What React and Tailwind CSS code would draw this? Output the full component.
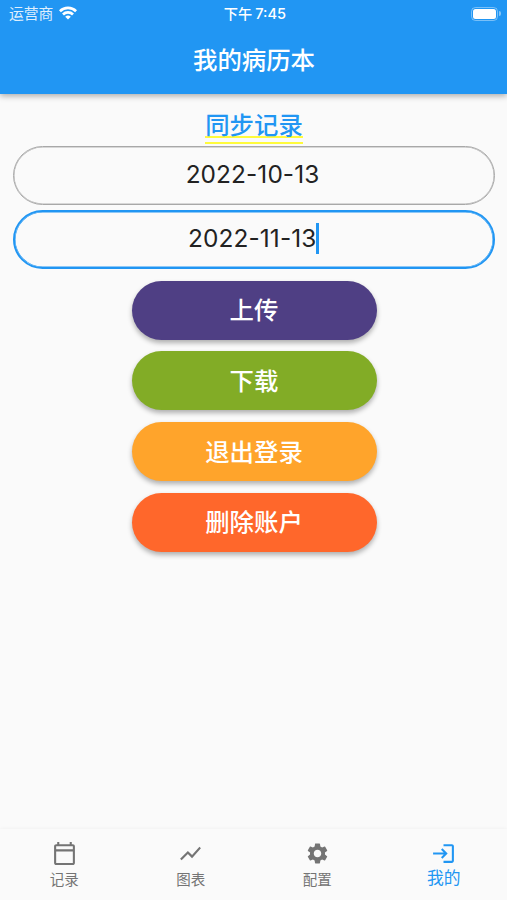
import { MdSettings } from 'react-icons/md';

const cjk = "font-['Inter','Noto_Sans_CJK_SC',sans-serif]";

function Icon({ d }) {
  return (
    <svg viewBox="0 0 24 24" className="size-[25px]" fill="currentColor">
      <path d={d} />
    </svg>
  );
}

const CALENDAR = 'M20 3h-1V1h-2v2H7V1H5v2H4c-1.1 0-2 .9-2 2v16c0 1.1.9 2 2 2h16c1.1 0 2-.9 2-2V5c0-1.1-.9-2-2-2zm0 18H4V10h16v11zm0-13H4V5h16v3z';
const CHART = 'M3.5 18.49l6-6.01 4 4L22 6.92l-1.41-1.41-7.09 7.97-4-4L2 16.99z';
const LOGIN = 'M11 7L9.6 8.4l2.6 2.6H2v2h10.2l-2.6 2.6L11 17l5-5-5-5zm9 12h-8v2h8c1.1 0 2-.9 2-2V5c0-1.1-.9-2-2-2h-8v2h8v14z';

const actions = [
  { label: '上传', color: 'bg-[#4f3f84]' },
  { label: '下载', color: 'bg-[#82ac26]' },
  { label: '退出登录', color: 'bg-[#ffa42b]' },
  { label: '删除账户', color: 'bg-[#ff672b]' },
];

function StatusBar() {
  return (
    <div className="grid h-[27px] grid-cols-3 items-center pl-[9px] pr-[6px] text-[14.8px] leading-none">
      <div className="flex items-center gap-[6px]">
        <span className="pt-px opacity-85">运营商</span>
        <svg viewBox="0 0 18 14" className="h-[14px] w-[18px]" fill="none" stroke="currentColor" strokeWidth="2.7">
          <path d="M0.9 5.2a11.5 11.5 0 0 1 16.2 0" />
          <path d="M4 8.5a7.1 7.1 0 0 1 10 0" />
          <path d="M9 13.6L6.2 10.8a4 4 0 0 1 5.6 0z" fill="currentColor" stroke="none" />
        </svg>
      </div>
      <div className="pt-px text-center text-[14.2px] font-medium whitespace-nowrap">
        下午<span className="ml-[3px] text-[14.6px]">7:45</span>
      </div>
      <div className="flex items-center justify-end gap-[1px]">
        <div className="h-[14px] w-[27px] rounded-[4.5px] border border-white/40 p-[1px]">
          <div className="h-full rounded-[2.5px] bg-white" />
        </div>
        <div className="h-[5px] w-[2px] rounded-r-full bg-white/45" />
      </div>
    </div>
  );
}

function Tab({ label, children }) {
  return (
    <div className="flex flex-1 flex-col items-center pt-[12px] text-[#747474]">
      {children}
      <span className="mt-[5px] text-[14.5px] leading-[18px]">{label}</span>
    </div>
  );
}

export default function App() {
  return (
    <div className={`flex h-[900px] w-[507px] flex-col overflow-hidden bg-[#fafafa] ${cjk}`}>
      <header className="h-[94px] shrink-0 bg-[#2196f3] text-white shadow-[0_2px_6px_rgba(0,0,0,0.32)]">
        <StatusBar />
        <h1 className="pt-[15px] pl-px text-center text-[24.4px] leading-[36px] font-medium">我的病历本</h1>
      </header>

      <main className="flex flex-1 flex-col items-center pt-[13px] pr-[12px] pl-[13px]">
        <div className="relative h-[39px] text-[24.4px] leading-[36px] font-medium text-[#2196f3]">
          <div className="absolute inset-x-0 top-[29px] h-[8px] border-y-2 border-[#fffb3b]" />
          <span className="relative">同步记录</span>
        </div>
        <div className="flex h-[59px] w-full items-center justify-center rounded-full border border-[#a8a8a8] pr-[3px] pb-[3px] text-[24.4px] tracking-[0.1px] text-[#222] shadow-[inset_0_0_0_0.5px_#b3b3b3]">
          2022-10-13
        </div>
        <div className="mt-[5px] flex h-[59px] w-full items-center justify-center rounded-full border-2 border-[#2196f3] pr-px pb-[3px] text-[24.4px] tracking-[0.1px] text-[#222] shadow-[inset_0_0_0_0.5px_#2196f3]">
          2022-11-13
          <span className="h-[31px] w-[2.5px] bg-[#2196f3]" />
        </div>
        <div className="mt-[11.5px] flex flex-col gap-[11.9px]">
          {actions.map(({ label, color }) => (
            <button
              key={label}
              className={`h-[59px] w-[245px] rounded-full text-[24.4px] leading-none font-medium text-white shadow-[0_3px_5px_rgba(0,0,0,0.3)] ${color}`}
            >
              {label}
            </button>
          ))}
        </div>
      </main>

      <nav className="flex h-[71px] shrink-0 bg-[#fafafa] pl-px shadow-[0_-1px_3px_rgba(0,0,0,0.03)]">
        <Tab label="记录"><Icon d={CALENDAR} /></Tab>
        <Tab label="图表"><Icon d={CHART} /></Tab>
        <Tab label="配置"><MdSettings className="size-[25px]" /></Tab>
        <div className="flex flex-1 flex-col items-center pt-[12px] text-[#2196f3]">
          <Icon d={LOGIN} />
          <span className="mt-[2px] text-[16.8px] leading-[20px]">我的</span>
        </div>
      </nav>
    </div>
  );
}
